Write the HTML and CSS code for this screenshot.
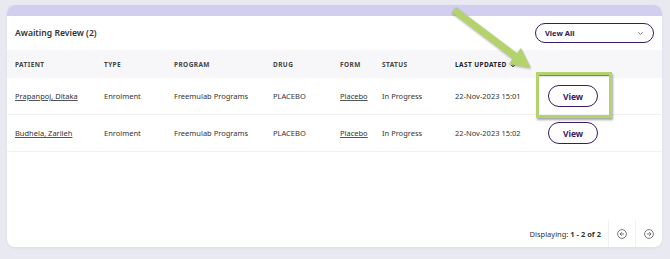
FILE: index.html
```html
<!DOCTYPE html>
<html lang="en">
<head>
<meta charset="utf-8">
<title>Awaiting Review</title>
<link rel="stylesheet" href="styles.css">
</head>
<body>
<div class="stage">
  <section class="card">
    <div class="band"></div>
    <div class="titlebar">
      <h2 class="title">Awaiting Review (2)</h2>
      <div class="select">
        <span>View All</span>
        <svg class="chev" width="5" height="3" viewBox="0 0 5 3"><path d="M0.5 0.5 L2.5 2.5 L4.5 0.5" fill="none" stroke="#6a5a84" stroke-width="0.8" stroke-linecap="round" stroke-linejoin="round"/></svg>
      </div>
    </div>
    <div class="row head">
      <div>PATIENT</div>
      <div>TYPE</div>
      <div>PROGRAM</div>
      <div>DRUG</div>
      <div>FORM</div>
      <div>STATUS</div>
      <div class="sorted">LAST UPDATED <svg class="sort" width="6" height="7" viewBox="0 0 6 7"><path d="M3 0.5 V6 M0.8 3.8 L3 6 L5.2 3.8" fill="none" stroke="#555" stroke-width="0.9"/></svg></div>
      <div></div>
    </div>
    <div class="row">
      <div><a class="link" href="#">Prapanpoj, Ditaka</a></div>
      <div>Enrolment</div>
      <div>Freemulab Programs</div>
      <div>PLACEBO</div>
      <div><a class="link" href="#">Placebo</a></div>
      <div>In Progress</div>
      <div>22-Nov-2023 15:01</div>
      <div><button class="btn">View</button></div>
    </div>
    <div class="row">
      <div><a class="link" href="#">Budhela, Zarileh</a></div>
      <div>Enrolment</div>
      <div>Freemulab Programs</div>
      <div>PLACEBO</div>
      <div><a class="link" href="#">Placebo</a></div>
      <div>In Progress</div>
      <div>22-Nov-2023 15:02</div>
      <div><button class="btn">View</button></div>
    </div>
    <div class="spacer"></div>
    <div class="footer">
      <div class="count">Displaying: <b>1 - 2 of 2</b></div>
      <div class="pg">
        <svg width="10" height="10" viewBox="0 0 10 10"><circle cx="5" cy="5" r="4.4" fill="none" stroke="#555" stroke-width="0.8"/><path d="M7 5 H3 M4.8 3.2 L3 5 L4.8 6.8" fill="none" stroke="#555" stroke-width="0.8"/></svg>
      </div>
      <div class="pg">
        <svg width="10" height="10" viewBox="0 0 10 10"><circle cx="5" cy="5" r="4.4" fill="none" stroke="#555" stroke-width="0.8"/><path d="M3 5 H7 M5.2 3.2 L7 5 L5.2 6.8" fill="none" stroke="#555" stroke-width="0.8"/></svg>
      </div>
    </div>
  </section>

  <div class="highlight"></div>
  <svg class="arrow" width="670" height="259" viewBox="0 0 670 259">
    <polygon points="456.1,7.2 517.1,53.2 521,48 531,68 509,64 512.9,58.8 451.9,12.8" fill="#b4d36c"/>
  </svg>
</div>
</body>
</html>
```

FILE: styles.css
```css
* { box-sizing: border-box; }

html, body {
  margin: 0;
  padding: 0;
}

body {
  background: #e9e9f2;
  font-family: "Noto Sans", "Open Sans", Arial, sans-serif;
  color: #333;
}

.stage {
  position: relative;
  width: 670px;
  height: 259px;
  padding: 5px 8px 0 7px;
}

.card {
  width: 655px;
  height: 242px;
  background: #fff;
  border-radius: 8px;
  display: flex;
  flex-direction: column;
  overflow: hidden;
  box-shadow: 0 1px 3px rgba(80, 80, 120, 0.08);
}

.band {
  height: 11px;
  background: #d1cef0;
  flex: none;
}

.titlebar {
  height: 34px;
  flex: none;
  display: flex;
  align-items: center;
  justify-content: space-between;
  padding: 0 8px;
}

.title {
  margin: 0;
  font-size: 8.6px;
  font-weight: 600;
  color: #333;
}

.select {
  width: 119px;
  height: 20px;
  border: 1.5px solid #3b1a66;
  border-radius: 10px;
  display: flex;
  align-items: center;
  justify-content: space-between;
  padding: 0 10px 0 9px;
  font-size: 7.5px;
  font-weight: 700;
  color: #2e1a4f;
}

.chev { display: block; }

.row {
  display: grid;
  grid-template-columns: 89px 70px 99px 67px 42px 73px 93px 1fr;
  align-items: center;
  height: 37px;
  padding-left: 8px;
  font-size: 7.5px;
  color: #333;
  border-bottom: 1px solid #f1f1f5;
  flex: none;
}

.row.head {
  height: 28px;
  background: #f7f7fa;
  font-size: 6.5px;
  font-weight: 700;
  letter-spacing: 0.4px;
  color: #444;
  border-bottom: none;
}

.sorted {
  color: #222;
  display: flex;
  align-items: center;
  gap: 3px;
}

.sort { display: block; }

.link {
  color: #333;
  text-decoration: underline;
  text-decoration-color: #555;
  text-underline-offset: 1px;
}

.btn {
  width: 50px;
  height: 22px;
  border: 1.5px solid #3b1a66;
  border-radius: 11px;
  background: #fff;
  font-family: inherit;
  font-size: 8.5px;
  font-weight: 700;
  color: #3b1a66;
  padding: 0;
  cursor: pointer;
}

.spacer { flex: 1; }

.footer {
  height: 27px;
  flex: none;
  display: flex;
  justify-content: flex-end;
  align-items: stretch;
  font-size: 7.5px;
  color: #333;
}

.count {
  display: flex;
  align-items: center;
  padding-right: 7px;
}

.count b {
  font-weight: 700;
  margin-left: 2px;
}

.pg {
  width: 27px;
  border-left: 1px solid #f0f0f3;
  display: flex;
  align-items: center;
  justify-content: center;
}

.pg svg { display: block; }

.highlight {
  position: absolute;
  left: 536px;
  top: 72px;
  width: 76px;
  height: 46px;
  border: 3.5px solid #b4d36c;
  box-shadow: 1px 2px 2px rgba(0, 0, 0, 0.35), inset 0 2px 1px -1px rgba(0, 0, 0, 0.55);
}

.arrow {
  position: absolute;
  left: 0;
  top: 0;
  pointer-events: none;
  filter: drop-shadow(0 1px 1px rgba(0, 0, 0, 0.3));
}
```
